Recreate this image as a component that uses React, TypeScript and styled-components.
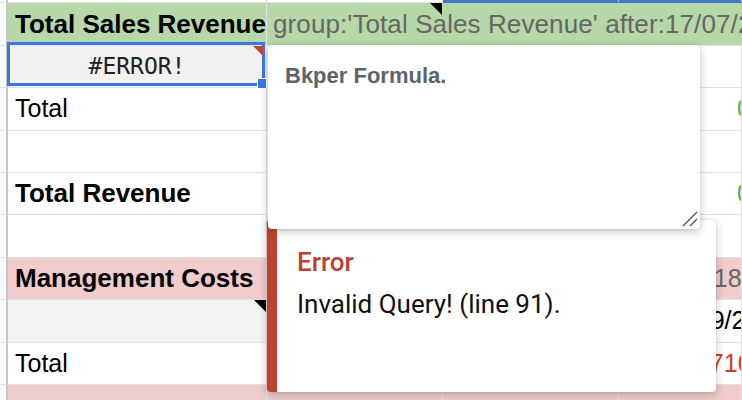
import React from 'react';
import styled, { createGlobalStyle } from 'styled-components';

const GlobalStyle = createGlobalStyle`
    html, body {
        margin: 0;
        padding: 0;
        overflow: hidden;
        background: #fff;
    }
`;

const Sheet = styled.div`
    position: relative;
    width: 742px;
    height: 400px;
    overflow: hidden;

    display: flex;
    flex-direction: column;

    background-color: #fff;
    font-family: "Liberation Sans", Arial, sans-serif;
`;

const Row = styled.div<{ $h?: number; $bg?: string }>`
    height: ${({ $h }) => $h ?? 42.4}px;
    flex-shrink: 0;

    display: grid;
    grid-template-columns: 8px 259px 176px 176px 1fr;

    background-color: ${({ $bg }) => $bg ?? '#fff'};
`;

const RowHead = styled.div`
    box-sizing: border-box;
    border-right: 2px solid #c4c4c4;
    border-bottom: 1px solid #e2e2e2;
    background-color: #f8f9fa;
`;

const Cell = styled.div<{
    $bold?: boolean;
    $color?: string;
    $bg?: string;
    $pad?: number;
    $center?: boolean;
    $noLine?: boolean;
    $selTop?: boolean;
}>`
    position: relative;
    box-sizing: border-box;
    min-width: 0;

    display: flex;
    align-items: center;
    justify-content: ${({ $center }) => ($center ? 'center' : 'flex-start')};
    padding-left: ${({ $pad }) => $pad ?? 7}px;

    border-right: 1px solid ${({ $noLine }) => ($noLine ? 'transparent' : '#e2e2e2')};
    border-bottom: ${({ $selTop }) => ($selTop ? '3px solid #3d7cc4' : '1px solid #e2e2e2')};
    background-color: ${({ $bg }) => $bg ?? 'transparent'};

    font-size: ${({ $bold }) => ($bold ? 26 : 25)}px;
    font-weight: ${({ $bold }) => ($bold ? 700 : 400)};
    color: ${({ $color }) => $color ?? '#000'};
    white-space: nowrap;
`;

const QueryCell = styled(Cell)`
    font-size: 26px;
    letter-spacing: 0.1px;
`;

const EdgeCell = styled(Cell)`
    overflow: hidden;
    font-size: 25px;
`;

const ErrorValue = styled.span`
    font-family: "DejaVu Sans Mono", "Liberation Mono", monospace;
    font-size: 23px;
    color: #222;
    padding-right: 7px;
`;

const Selection = styled.div`
    position: absolute;
    top: -4px;
    left: -1px;
    right: 1px;
    bottom: 1px;

    border: 3px solid #3b78e7;
    pointer-events: none;
`;

const Handle = styled.div`
    position: absolute;
    right: -5px;
    bottom: -6px;
    width: 8px;
    height: 9px;

    background-color: #3b78e7;
    border: 1px solid #fff;
`;

const Marker = styled.div<{ $color: string; $size: number; $right?: number }>`
    position: absolute;
    top: 0;
    right: ${({ $right }) => $right ?? 0}px;
    width: 0;
    height: 0;

    border-top: ${({ $size, $color }) => `${$size}px solid ${$color}`};
    border-left: ${({ $size }) => `${$size}px solid transparent`};
    z-index: 2;
`;

const NoteEditor = styled.div`
    position: absolute;
    left: 268px;
    top: 45px;
    width: 432px;
    height: 184px;
    box-sizing: border-box;
    padding: 18px 17px;

    border-radius: 4px;
    background-color: #fff;
    box-shadow: 0 3px 10px rgba(0, 0, 0, 0.22), 0 0 2px rgba(0, 0, 0, 0.15);
    z-index: 4;
`;

const NoteText = styled.div`
    font-family: "Liberation Sans", Arial, sans-serif;
    font-size: 22px;
    font-weight: 700;
    color: #5f6368;
`;

const Grip = styled.svg`
    position: absolute;
    right: 2px;
    bottom: 2px;
    width: 16px;
    height: 16px;
`;

const ErrorTip = styled.div`
    position: absolute;
    left: 267px;
    top: 220px;
    width: 449px;
    height: 172px;
    box-sizing: border-box;
    padding: 27px 20px;

    border-left: 10px solid #bd4331;
    border-radius: 4px;
    background-color: #fff;
    box-shadow: 0 3px 10px rgba(0, 0, 0, 0.22), 0 0 2px rgba(0, 0, 0, 0.12);
    z-index: 3;

    font-family: Roboto, "Liberation Sans", Arial, sans-serif;
`;

const ErrorTitle = styled.div`
    font-size: 26px;
    font-weight: 500;
    color: #b94232;
`;

const ErrorMessage = styled.div`
    margin-top: 12px;
    font-size: 26px;
    color: #111;
`;

const GREEN = '#b6d7a8';
const PINK = '#f0cccc';
const GRAY_TEXT = '#666';

const App: React.FC = () => {
    return (
        <>
            <GlobalStyle />
            <Sheet>
                <Row $h={3.4}>
                    <RowHead />
                    <Cell />
                    <Cell />
                    <Cell $selTop />
                    <Cell $selTop />
                </Row>

                <Row $bg={GREEN}>
                    <RowHead />
                    <Cell $bold>Total Sales Revenue</Cell>
                    <QueryCell $noLine $pad={6} $color={GRAY_TEXT}>
                        group:'Total Sales Revenue' after:17/07/2018
                        <Marker $color="#000" $size={12} />
                    </QueryCell>
                    <Cell $noLine />
                    <Cell $noLine />
                </Row>

                <Row>
                    <RowHead />
                    <Cell $bg="#f1f1f1" $center>
                        <ErrorValue>#ERROR!</ErrorValue>
                        <Selection>
                            <Handle />
                        </Selection>
                        <Marker $color="#c5432f" $size={10} $right={3} />
                    </Cell>
                    <Cell />
                    <Cell />
                    <Cell />
                </Row>

                <Row>
                    <RowHead />
                    <Cell>Total</Cell>
                    <Cell />
                    <Cell />
                    <EdgeCell $pad={118} $color="#6aa84f">0.00</EdgeCell>
                </Row>

                <Row>
                    <RowHead />
                    <Cell />
                    <Cell />
                    <Cell />
                    <Cell />
                </Row>

                <Row>
                    <RowHead />
                    <Cell $bold>Total Revenue</Cell>
                    <Cell />
                    <Cell />
                    <EdgeCell $pad={118} $color="#6aa84f">0.00</EdgeCell>
                </Row>

                <Row>
                    <RowHead />
                    <Cell />
                    <Cell />
                    <Cell />
                    <Cell />
                </Row>

                <Row $bg={PINK}>
                    <RowHead />
                    <Cell $bold>Management Costs</Cell>
                    <Cell />
                    <Cell />
                    <EdgeCell $pad={67} $color={GRAY_TEXT}>2018</EdgeCell>
                </Row>

                <Row>
                    <RowHead />
                    <Cell $bg="#f3f3f3">
                        <Marker $color="#000" $size={12} />
                    </Cell>
                    <Cell />
                    <Cell />
                    <EdgeCell $pad={43}>01/09/2018</EdgeCell>
                </Row>

                <Row>
                    <RowHead />
                    <Cell>Total</Cell>
                    <Cell />
                    <Cell />
                    <EdgeCell $pad={70} $color="#cc4125">3,710.00</EdgeCell>
                </Row>

                <Row $bg={PINK}>
                    <RowHead />
                    <Cell />
                    <Cell />
                    <Cell />
                    <Cell />
                </Row>

                <NoteEditor>
                    <NoteText>Bkper Formula.</NoteText>
                    <Grip viewBox="0 0 16 16">
                        <line x1="15" y1="1" x2="1" y2="15" stroke="#5a5a5a" strokeWidth="1.4" />
                        <line x1="15" y1="8" x2="8" y2="15" stroke="#5a5a5a" strokeWidth="1.4" />
                    </Grip>
                </NoteEditor>

                <ErrorTip>
                    <ErrorTitle>Error</ErrorTitle>
                    <ErrorMessage>Invalid Query! (line 91).</ErrorMessage>
                </ErrorTip>
            </Sheet>
        </>
    );
};

export default App;
